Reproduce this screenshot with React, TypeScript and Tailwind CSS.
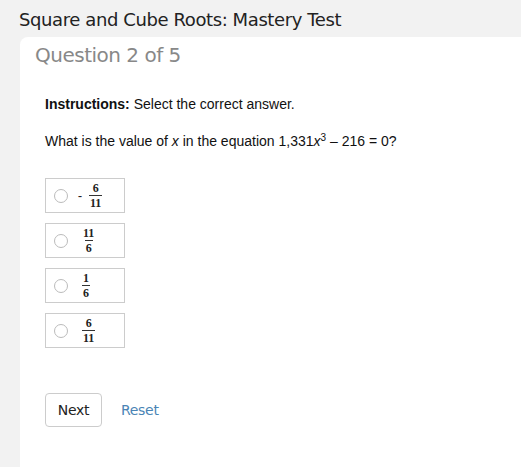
import React from 'react';

type Frac = { neg?: boolean; num: string; den: string };

const OPTIONS: Frac[] = [
  { neg: true, num: '6', den: '11' },
  { num: '11', den: '6' },
  { num: '1', den: '6' },
  { num: '6', den: '11' },
];

const Fraction = ({ f }: { f: Frac }) => (
  <span className="flex items-center font-['Liberation_Serif',serif] font-bold text-[12px] leading-none text-[#222]">
    {f.neg && <span className="mr-[7px] text-[12px]">-</span>}
    <span className="inline-flex flex-col items-center">
      <span className="px-[1px] pb-[1px]">{f.num}</span>
      <span className="border-t border-[#333] px-[1px] pt-[1px]">{f.den}</span>
    </span>
  </span>
);

export default function App() {
  return (
    <div className="w-[521px] h-[467px] overflow-hidden bg-[#f2f2f2] flex flex-col font-['Liberation_Sans',sans-serif]">
      <h1 className="pl-[19px] pt-[6px] h-[37px] text-[18px] text-[#222] font-['DejaVu_Sans',sans-serif] tracking-[-0.4px]">
        Square and Cube Roots: Mastery Test
      </h1>
      <div className="ml-[20px] flex-1 bg-white rounded-tl-[8px] flex flex-col">
        <div className="pl-[15px] pt-[3px] text-[20px] text-[#888] font-['DejaVu_Sans',sans-serif] tracking-[-0.5px]">
          Question 2 of 5
        </div>
        <div className="pl-[25px] pt-[24px] text-[14px] leading-[21px] text-[#111]">
          <p>
            <b>Instructions:</b> Select the correct answer.
          </p>
          <p className="mt-[16px]">
            What is the value of <i>x</i> in the equation 1,331<i>x</i>
            <sup className="text-[10px]">3</sup> – 216 = 0?
          </p>
          <div className="mt-[26px] flex flex-col gap-[10px]">
            {OPTIONS.map((o, i) => (
              <label
                key={i}
                className="w-[80px] h-[35px] border border-[#ccc] flex items-center pl-[8px] gap-[10px]"
              >
                <span className="w-[14px] h-[14px] rounded-full border border-[#bbb] bg-white shrink-0" />
                <span className={o.neg ? 'ml-0' : 'ml-[4px]'}>
                  <Fraction f={o} />
                </span>
              </label>
            ))}
          </div>
          <div className="mt-[45px] flex items-center gap-[19px]">
            <button className="w-[57px] h-[34px] border border-[#ccc] rounded-[4px] bg-white text-[14px] text-[#222] font-['DejaVu_Sans',sans-serif] tracking-[-0.3px]">
              Next
            </button>
            <span className="text-[14px] text-[#4a84b5] font-['DejaVu_Sans',sans-serif] tracking-[-0.3px]">
              Reset
            </span>
          </div>
        </div>
      </div>
    </div>
  );
}
